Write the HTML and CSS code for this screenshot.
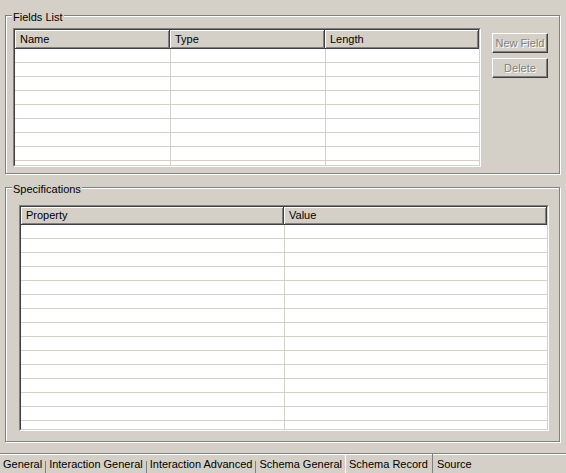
FILE: index.html
```html
<!DOCTYPE html>
<html>
<head>
  <meta charset="utf-8">
  <title>Schema Record</title>
  <link rel="stylesheet" href="styles.css">
</head>
<body>
  <main class="page">

    <!-- fields list -->
    <section class="group fields">
      <div class="group-title">Fields List</div>
      <div class="group-body">
        <div class="list fields-list">
          <div class="list-inner">
            <table>
              <thead>
                <tr><th class="col-name">Name</th><th class="col-type">Type</th><th>Length</th></tr>
              </thead>
              <tbody>
                <tr><td></td><td></td><td></td></tr>
                <tr><td></td><td></td><td></td></tr>
                <tr><td></td><td></td><td></td></tr>
                <tr><td></td><td></td><td></td></tr>
                <tr><td></td><td></td><td></td></tr>
                <tr><td></td><td></td><td></td></tr>
                <tr><td></td><td></td><td></td></tr>
                <tr><td></td><td></td><td></td></tr>
                <tr><td></td><td></td><td></td></tr>
              </tbody>
            </table>
          </div>
        </div>
        <div class="buttons">
          <button class="btn" disabled>New Field</button>
          <button class="btn" disabled>Delete</button>
        </div>
      </div>
    </section>

    <!-- specifications -->
    <section class="group specs">
      <div class="group-title">Specifications</div>
      <div class="group-body">
        <div class="list specs-list">
          <div class="list-inner">
            <table>
              <thead>
                <tr><th class="col-prop">Property</th><th>Value</th></tr>
              </thead>
              <tbody>
                <tr><td></td><td></td></tr>
                <tr><td></td><td></td></tr>
                <tr><td></td><td></td></tr>
                <tr><td></td><td></td></tr>
                <tr><td></td><td></td></tr>
                <tr><td></td><td></td></tr>
                <tr><td></td><td></td></tr>
                <tr><td></td><td></td></tr>
                <tr><td></td><td></td></tr>
                <tr><td></td><td></td></tr>
                <tr><td></td><td></td></tr>
                <tr><td></td><td></td></tr>
                <tr><td></td><td></td></tr>
                <tr><td></td><td></td></tr>
                <tr><td></td><td></td></tr>
              </tbody>
            </table>
          </div>
        </div>
      </div>
    </section>
  </main>

  <footer class="tabs">
    <span class="tab first">General</span>
    <span class="tab">Interaction General</span>
    <span class="tab">Interaction Advanced</span>
    <span class="tab">Schema General</span>
    <span class="tab selected">Schema Record</span>
    <span class="tab after-selected">Source</span>
  </footer>
</body>
</html>
```

FILE: styles.css
```css
/* classic windows look */
body {
  margin: 0;
  background-color: #d4d0c8;
  font-family: "Liberation Sans", Arial, sans-serif;
  font-size: 11px;
  color: #000;
  overflow: hidden;
}

.page {
  padding: 15px 0 0 5px;
}

/* etched group boxes */
.group {
  box-sizing: border-box;
  width: 555px;
  border: 1px solid #808080;
  box-shadow: inset 1px 1px 0 #fff, 1px 1px 0 #fff;
}

.fields {
  height: 159px;
}

.specs {
  height: 255px;
  margin-top: 13px;
}

.group-title {
  width: fit-content;
  margin: -5px 0 0 6px;
  padding: 0 1px;
  line-height: 13px;
  background-color: #d4d0c8;
}

.group-body {
  display: flex;
  align-items: flex-start;
}

.fields .group-body {
  gap: 11px;
  padding: 4px 10px 0 7px;
}

.specs .group-body {
  padding: 9px 10px 0 13px;
}

/* sunken list views */
.list {
  box-sizing: border-box;
  border: 1px solid;
  border-color: #808080 #fff #fff #808080;
}

.list-inner {
  height: 100%;
  box-sizing: border-box;
  border: 1px solid;
  border-color: #404040 #d4d0c8 #d4d0c8 #404040;
  background-color: #fff;
  overflow: hidden;
}

.fields-list {
  width: 468px;
  height: 139px;
}

.specs-list {
  width: 530px;
  height: 226px;
}

.list table {
  width: 100%;
  table-layout: fixed;
  border-collapse: separate;
  border-spacing: 0;
}

.list th {
  box-sizing: border-box;
  height: 19px;
  padding: 0 0 0 5px;
  line-height: 18px;
  font-weight: normal;
  text-align: left;
  background-color: #d4d0c8;
  border-right: 1px solid #404040;
  border-bottom: 1px solid #404040;
  box-shadow: inset 1px 1px 0 #fff, inset -1px -1px 0 #808080;
}

.specs-list th {
  height: 18px;
  line-height: 17px;
}

.col-name,
.col-type {
  width: 155px;
}

.col-prop {
  width: 263px;
}

.list td {
  box-sizing: border-box;
  height: 14px;
  padding: 0;
  border-bottom: 1px solid #d4d0c8;
}

.list td + td {
  border-left: 1px solid #d4d0c8;
}

/* buttons */
.buttons {
  display: flex;
  flex-direction: column;
  gap: 5px;
  margin-top: 5px;
}

.btn {
  width: 56px;
  height: 20px;
  padding: 0;
  font-family: inherit;
  font-size: 11px;
  color: #808080;
  text-shadow: 1px 1px 0 #fff;
  background-color: #d4d0c8;
  border: 1px solid;
  border-color: #fff #404040 #404040 #fff;
  box-shadow: inset -1px -1px 0 #808080;
}

/* bottom tabs */
.tabs {
  display: flex;
  height: 20px;
  box-sizing: border-box;
  margin-top: 11px;
  border-top: 1px solid #808080;
  box-shadow: inset 0 1px 0 #fff;
}

.tab {
  padding: 1px 3px 0 4px;
  line-height: 18px;
  white-space: nowrap;
  background: linear-gradient(#808080, #808080) 0 100% / 1px 12px no-repeat;
}

.tab.first,
.tab.after-selected {
  background: none;
}

.tab.first {
  padding-left: 3px;
}

.tab.selected {
  padding: 1px 4px 0 3px;
  background: none;
  border-left: 1px solid #fff;
  border-right: 1px solid #808080;
}
```
